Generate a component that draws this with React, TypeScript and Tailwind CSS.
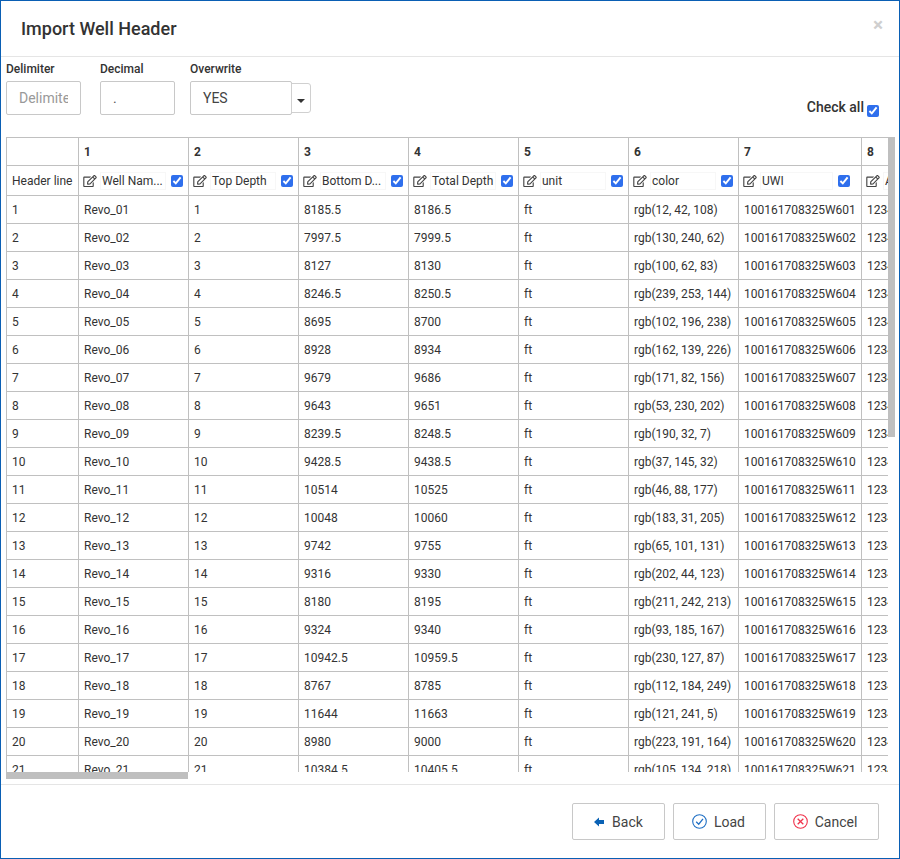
import React from "react";
import { FaRegEdit } from "react-icons/fa";

const rows: [string, string, string, string][] = [
  ["8185.5", "8186.5", "rgb(12, 42, 108)", "601"],
  ["7997.5", "7999.5", "rgb(130, 240, 62)", "602"],
  ["8127", "8130", "rgb(100, 62, 83)", "603"],
  ["8246.5", "8250.5", "rgb(239, 253, 144)", "604"],
  ["8695", "8700", "rgb(102, 196, 238)", "605"],
  ["8928", "8934", "rgb(162, 139, 226)", "606"],
  ["9679", "9686", "rgb(171, 82, 156)", "607"],
  ["9643", "9651", "rgb(53, 230, 202)", "608"],
  ["8239.5", "8248.5", "rgb(190, 32, 7)", "609"],
  ["9428.5", "9438.5", "rgb(37, 145, 32)", "610"],
  ["10514", "10525", "rgb(46, 88, 177)", "611"],
  ["10048", "10060", "rgb(183, 31, 205)", "612"],
  ["9742", "9755", "rgb(65, 101, 131)", "613"],
  ["9316", "9330", "rgb(202, 44, 123)", "614"],
  ["8180", "8195", "rgb(211, 242, 213)", "615"],
  ["9324", "9340", "rgb(93, 185, 167)", "616"],
  ["10942.5", "10959.5", "rgb(230, 127, 87)", "617"],
  ["8767", "8785", "rgb(112, 184, 249)", "618"],
  ["11644", "11663", "rgb(121, 241, 5)", "619"],
  ["8980", "9000", "rgb(223, 191, 164)", "620"],
  ["10384.5", "10405.5", "rgb(105, 134, 218)", "621"],
];

const headers = ["Well Nam...", "Top Depth", "Bottom D...", "Total Depth", "unit", "color", "UWI"];
const cell = "border border-[#c0c0c0] pl-[5px] pr-0 overflow-hidden whitespace-nowrap align-middle";

function Check({ className = "" }: { className?: string }) {
  return (
    <input
      type="checkbox"
      defaultChecked
      className={"m-0 h-[12px] w-[12px] shrink-0 accent-[#2f6fed] " + className}
    />
  );
}

function HeaderCell({ label, last }: { label: string; last?: boolean }) {
  return (
    <div className="flex h-[29px] items-center">
      <FaRegEdit className="ml-[-1px] w-[14px] h-[12px] shrink-0 text-[#444444]" />
      <div
        className={
          "ml-[3px] h-[18px] border border-[#f7f7f7] pl-[1px] leading-[17px] text-[#333333] overflow-hidden whitespace-nowrap " +
          (last ? "w-[73px]" : "w-[66px]")
        }
      >
        {label}
      </div>
      <Check className="ml-[5px]" />
    </div>
  );
}

export default function App() {
  return (
    <div className="h-[859px] w-[900px] border border-[#0a5fb4] bg-white text-[#333333] flex flex-col font-['Roboto',sans-serif] text-[12px] overflow-hidden">
      <div className="h-[56px] shrink-0 border-b border-[#e5e5e5] flex items-center justify-between pl-[20px] pr-[16px]">
        <h1 className="text-[18px] font-medium leading-[56px]">Import Well Header</h1>
        <span className="text-[#cfcfcf] text-[19px] font-bold leading-none mt-[-8px]">×</span>
      </div>

      <div className="h-[80px] shrink-0 relative flex pl-[5px] pt-[5px]">
        <div className="w-[94px]">
          <div className="text-[12px] font-medium leading-[14px]">Delimiter</div>
          <div className="mt-[5px] w-[75px] h-[34px] border border-[#c8c8c8] rounded-[2px] pl-[12px] pr-[12px] text-[14px] text-[#999999] leading-[32px]">
            <div className="overflow-hidden whitespace-nowrap">Delimiter</div>
          </div>
        </div>
        <div className="w-[90px]">
          <div className="text-[12px] font-medium leading-[14px]">Decimal</div>
          <div className="mt-[5px] w-[75px] h-[34px] border border-[#c8c8c8] rounded-[2px] pl-[12px] text-[14px] text-[#555555] leading-[32px]">
            .
          </div>
        </div>
        <div>
          <div className="text-[12px] font-medium leading-[14px]">Overwrite</div>
          <div className="mt-[5px] flex items-start">
            <div className="w-[102px] h-[34px] border border-[#c8c8c8] rounded-[2px] pl-[12px] text-[14px] text-[#444444] leading-[32px]">
              YES
            </div>
            <div className="mt-[2px] ml-[-1px] w-[20px] h-[30px] border border-[#d0d0d0] rounded-r-[3px] flex items-center justify-center">
              <span className="mt-[6px] w-0 h-0 border-x-[4px] border-x-transparent border-t-[4px] border-t-[#333333]" />
            </div>
          </div>
        </div>
        <div className="ml-auto mr-[20px] mt-[35px] flex items-start">
          <span className="text-[14px] font-medium leading-[26px] mt-[-3px]">Check all</span>
          <Check className="ml-[3px] mt-[8px]" />
        </div>
      </div>

      <div className="relative ml-[5px] w-[889px] h-[642px] shrink-0">
        <div className="w-[882px] h-[635px] overflow-hidden">
          <table className="table-fixed border-collapse w-[965px]">
            <colgroup>
              <col className="w-[72px]" />
              <col className="w-[110px]" />
              <col className="w-[110px]" />
              <col className="w-[110px]" />
              <col className="w-[110px]" />
              <col className="w-[110px]" />
              <col className="w-[110px]" />
              <col className="w-[123px]" />
              <col className="w-[110px]" />
            </colgroup>
            <tbody>
              <tr className="h-[28px]">
                <td className={cell}></td>
                {[1, 2, 3, 4, 5, 6, 7, 8].map((n) => (
                  <td key={n} className={cell + " font-bold"}>
                    {n}
                  </td>
                ))}
              </tr>
              <tr className="h-[30px]">
                <td className={cell}>Header line</td>
                {headers.map((h, i) => (
                  <td key={h} className={cell}>
                    <HeaderCell label={h} last={i === 6} />
                  </td>
                ))}
                <td className={cell}>
                  <HeaderCell label="API" />
                </td>
              </tr>
              {rows.map((r, i) => {
                const n = i + 1;
                const p = n < 10 ? "0" + n : "" + n;
                return (
                  <tr key={n} className="h-[28px]">
                    <td className={cell}>{n}</td>
                    <td className={cell}>Revo_{p}</td>
                    <td className={cell}>{n}</td>
                    <td className={cell}>{r[0]}</td>
                    <td className={cell}>{r[1]}</td>
                    <td className={cell}>ft</td>
                    <td className={cell}>{r[2]}</td>
                    <td className={cell}>100161708325W{r[3]}</td>
                    <td className={cell}>123456</td>
                  </tr>
                );
              })}
            </tbody>
          </table>
        </div>
        <div className="absolute left-0 top-[635px] h-[7px] w-[182px] bg-[#bfbfbf]" />
        <div className="absolute left-[882px] top-0 h-[300px] w-[7px] bg-[#bfbfbf]" />
      </div>

      <div className="mt-[5px] flex-1 border-t border-[#e5e5e5] flex justify-end items-start pt-[18px] pr-[20px] gap-[8px] text-[14px]">
        <button className="w-[93px] h-[37px] border border-[#c8c8c8] rounded-[2px] flex items-center justify-center gap-[8px] text-[#444444] pt-[1px]">
          <svg width="10" height="10" viewBox="0 0 10 10" aria-hidden="true">
            <path d="M0 5 L5 0.5 V3 H10 V7 H5 V9.5 Z" fill="#0a62b5" />
          </svg>
          Back
        </button>
        <button className="w-[93px] h-[37px] border border-[#c8c8c8] rounded-[2px] flex items-center justify-center gap-[7px] text-[#444444] pt-[1px] pr-[2px]">
          <svg width="15" height="15" viewBox="0 0 15 15" fill="none" className="mt-[-1px]" aria-hidden="true">
            <circle cx="7.5" cy="7.5" r="6.8" stroke="#1f6fc4" strokeWidth="1.1" />
            <path d="M4.2 7.8 L6.7 10.2 L11 4.8" stroke="#1f6fc4" strokeWidth="1.3" />
          </svg>
          Load
        </button>
        <button className="w-[105px] h-[37px] border border-[#c8c8c8] rounded-[2px] flex items-center justify-center gap-[7px] text-[#444444] pt-[1px] pr-[3px]">
          <svg width="15" height="15" viewBox="0 0 15 15" fill="none" className="mt-[-1px]" aria-hidden="true">
            <circle cx="7.5" cy="7.5" r="6.8" stroke="#f0324b" strokeWidth="1.1" />
            <path d="M4.7 4.7 L10.3 10.3 M10.3 4.7 L4.7 10.3" stroke="#f0324b" strokeWidth="1.3" />
          </svg>
          Cancel
        </button>
      </div>
    </div>
  );
}
